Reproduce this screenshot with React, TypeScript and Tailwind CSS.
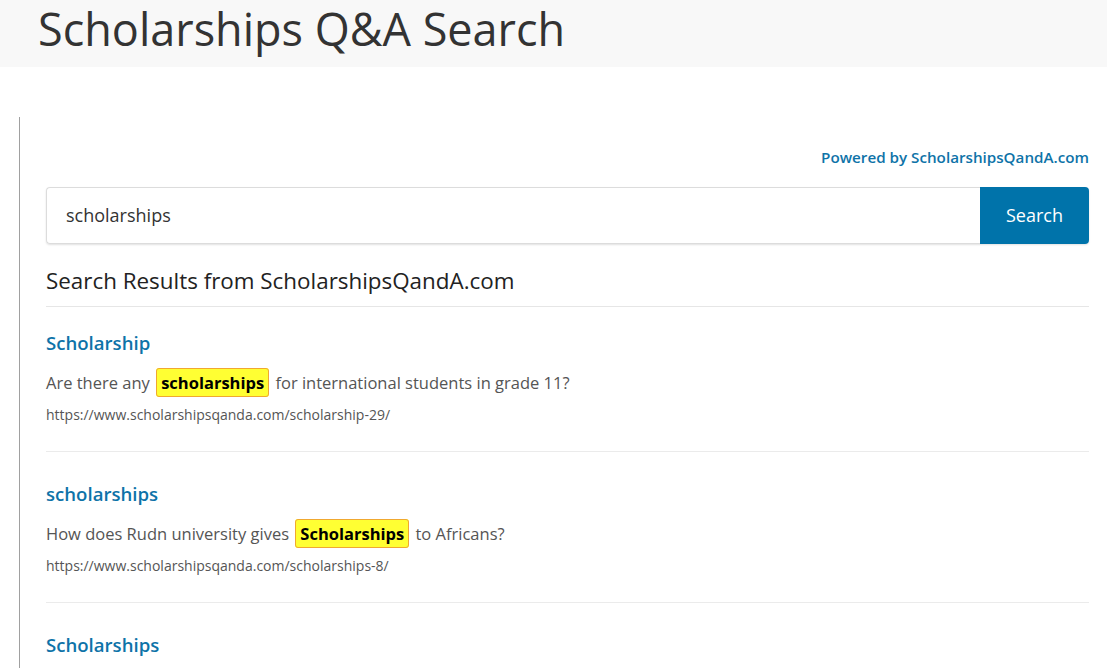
import { useState } from 'react';

const results = [
  {
    title: 'Scholarship',
    before: 'Are there any',
    hit: 'scholarships',
    after: 'for international students in grade 11?',
    url: 'https://www.scholarshipsqanda.com/scholarship-29/',
  },
  {
    title: 'scholarships',
    before: 'How does Rudn university gives',
    hit: 'Scholarships',
    after: 'to Africans?',
    url: 'https://www.scholarshipsqanda.com/scholarships-8/',
  },
  {
    title: 'Scholarships',
    before: 'What scholarships are available for',
    hit: 'scholarships',
    after: 'students?',
    url: 'https://www.scholarshipsqanda.com/scholarships/',
  },
];

export default function App() {
  const [q, setQ] = useState('scholarships');

  return (
    <div className="min-h-screen bg-white font-['Open_Sans',sans-serif] text-[#333]">
      {/* Header */}
      <header className="h-[67px] bg-[#f8f8f8] pl-[38px]">
        <h1 className="text-[45px] leading-[58px] text-[#333]">Scholarships Q&amp;A Search</h1>
      </header>

      <div className="mt-[50px] ml-[19px] border-l border-[#a0a0a0] pl-[26px] pr-[18px] pt-[29px]">
        <div className="flex justify-end">
          <a href="#" className="text-[15.2px] font-semibold leading-[22px] text-[#0e73a8]">
            Powered by ScholarshipsQandA.com
          </a>
        </div>

        {/* Search bar */}
        <form className="mt-[19px] flex h-[57px] rounded-[4px] shadow-[0_1px_2px_rgba(0,0,0,0.12)]" onSubmit={(e) => e.preventDefault()}>
          <input
            value={q}
            onChange={(e) => setQ(e.target.value)}
            className="min-w-0 flex-1 rounded-l-[4px] border border-r-0 border-[#dcdcdc] px-[19px] text-[18px] text-[#333] outline-none"
          />
          <button className="w-[109px] rounded-r-[4px] bg-[#0073aa] text-[18px] text-white">Search</button>
        </form>

        <h2 className="mt-[21px] border-b border-[#e6e6e6] pb-[9px] text-[22.4px] leading-[32px] text-[#222]">
          Search Results from ScholarshipsQandA.com
        </h2>

        <div>
          {results.map((r, i) => (
            <div key={i} className={`border-b border-[#ebebeb] pb-[25px] ${i === 0 ? 'pt-[22px]' : 'pt-[28px]'}`}>
              <a href="#" className="block text-[18.6px] font-semibold leading-[28px] text-[#0e73a8]">
                {r.title}
              </a>
              <p className="mt-[12px] text-[16.5px] leading-[28px] text-[#555]">
                {r.before}{' '}
                <span className="mx-[2px] rounded-[3px] border border-[#f0a830] bg-[#ffff33] px-[4px] py-[2px] font-bold text-black">
                  {r.hit}
                </span>{' '}
                {r.after}
              </p>
              <div className="mt-[7px] text-[14px] leading-[22px] text-[#555]">{r.url}</div>
            </div>
          ))}
        </div>
      </div>
    </div>
  );
}
